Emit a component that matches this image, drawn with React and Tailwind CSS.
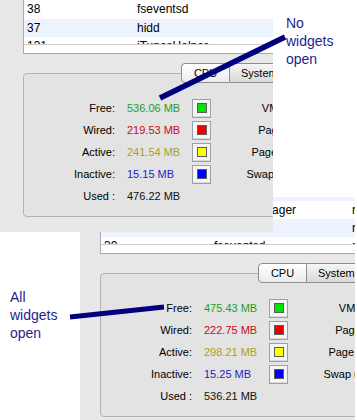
const FIRST_ROWS = [
  { h: 'h-[19px]', pid: '38', name: 'fseventsd', user: 'root' },
  { h: 'h-[18px]', alt: true, pid: '37', name: 'hidd', user: 'root' },
  { h: 'h-[7px]', pid: '131', name: 'iTunesHelper', user: 'user' },
];

const SECOND_ROWS = [
  { h: 'h-[4px]', alt: true, pid: '', name: '', user: '' },
  { h: 'h-[18px]', pid: '36', name: 'dynamic_pager', user: 'root' },
  { h: 'h-[18px]', alt: true, pid: '35', name: 'distnoted', user: 'root' },
  { h: 'h-[7px]', pid: '30', name: 'fseventsd', user: 'root' },
];

const SWATCHES = {
  green: 'bg-[#00e400]',
  red: 'bg-[#f00000]',
  yellow: 'bg-[#ffff00]',
  blue: 'bg-[#0000ff]',
};

const FIRST_STATS = [
  { label: 'Free:', value: '536.06 MB', tone: 'text-[#1f9e1f]', swatch: 'green', right: 'VM size:' },
  { label: 'Wired:', value: '219.53 MB', tone: 'text-[#cc0a14]', swatch: 'red', right: 'Page ins:' },
  { label: 'Active:', value: '241.54 MB', tone: 'text-[#a8a21e]', swatch: 'yellow', right: 'Page outs:' },
  { label: 'Inactive:', value: '15.15 MB', tone: 'text-[#2424c0]', swatch: 'blue', right: 'Swap used:' },
  { label: 'Used :', value: '476.22 MB', tone: 'text-[#111111]' },
];

const SECOND_STATS = [
  { label: 'Free:', value: '475.43 MB', tone: 'text-[#1f9e1f]', swatch: 'green', right: 'VM size:' },
  { label: 'Wired:', value: '222.75 MB', tone: 'text-[#cc0a14]', swatch: 'red', right: 'Page ins:' },
  { label: 'Active:', value: '298.21 MB', tone: 'text-[#a8a21e]', swatch: 'yellow', right: 'Page outs:' },
  { label: 'Inactive:', value: '15.25 MB', tone: 'text-[#2424c0]', swatch: 'blue', right: 'Swap used:' },
  { label: 'Used :', value: '536.21 MB', tone: 'text-[#111111]' },
];

function ProcessTable({ rows, inset }) {
  return (
    <div className={`${inset} w-[420px] border-b border-l border-[#a9a9a9] bg-white text-[12px] text-black`}>
      {rows.map((row, i) => (
        <div
          key={i}
          className={`flex overflow-hidden leading-[18px] ${row.h} ${row.alt ? 'bg-[#edf3fe]' : 'bg-white'}`}
        >
          <span className="w-[113px] shrink-0 pl-[3px]">{row.pid}</span>
          <span className="w-[138px] shrink-0">{row.name}</span>
          <span className="shrink-0">{row.user}</span>
        </div>
      ))}
      <div className="h-[9px] border-t border-[#cdcdcd]" />
    </div>
  );
}

function Swatch({ color }) {
  return (
    <div className="flex h-[19px] w-[19px] shrink-0 items-center justify-center border border-[#a0a0a0] bg-[#f5f5f5] shadow-[inset_0_-1px_0_#dadada]">
      <div className={`h-[10px] w-[10px] border border-[#5c5c5c] ${SWATCHES[color]}`} />
    </div>
  );
}

function MemoryBox({ stats, inset }) {
  return (
    <div className={`${inset} mt-[19px] h-[144px] w-[420px] rounded-[4px] border border-[#b3b3b3] bg-[#e3e3e3]`}>
      {/* segmented tabs sit on the top border */}
      <div className="-mt-[11px] ml-[157px] flex h-[20px] text-[11px] leading-[18px] text-black">
        <div className="w-[49px] rounded-l-[4px] border border-[#8e8e8e] bg-linear-to-b from-white to-[#ebebeb] text-center">
          CPU
        </div>
        <div className="border-y border-r border-[#8e8e8e] bg-linear-to-b from-[#f6f6f6] to-[#d9d9d9] px-[11px]">
          System Memory
        </div>
      </div>

      <div className="mt-[14px] text-[11px] text-black">
        {stats.map((s) => (
          <div key={s.label} className="flex h-[22px] items-center">
            <span className="w-[91px] shrink-0 text-right">{s.label}</span>
            <span className={`ml-[12px] w-[65px] shrink-0 ${s.tone}`}>{s.value}</span>
            {s.swatch ? <Swatch color={s.swatch} /> : <span className="w-[19px] shrink-0" />}
            <span className="w-[93px] shrink-0 text-right">{s.right}</span>
          </div>
        ))}
      </div>
    </div>
  );
}

function Panel({ className, rows, stats, inset }) {
  return (
    <div className={`absolute overflow-hidden bg-[#e8e8e8] ${className}`}>
      <ProcessTable rows={rows} inset={inset} />
      <MemoryBox stats={stats} inset={inset} />
    </div>
  );
}

function Note({ className, lines }) {
  return (
    <div className={`absolute text-[14px] leading-[18px] text-[#1e1e8e] ${className}`}>
      {lines.map((l) => (
        <div key={l}>{l}</div>
      ))}
    </div>
  );
}

export default function App() {
  return (
    <div className="relative h-[420px] w-[357px] overflow-hidden bg-white font-['Liberation_Sans',Arial,sans-serif]">
      <Panel className="left-[80px] top-[197px] h-[240px] w-[275px]" rows={SECOND_ROWS} stats={SECOND_STATS} inset="ml-[20px]" />
      <Panel className="left-0 top-0 z-10 h-[232px] w-[273px]" rows={FIRST_ROWS} stats={FIRST_STATS} inset="ml-[23px]" />

      <Note className="left-[286px] top-[14px] z-20" lines={['No', 'widgets', 'open']} />
      <Note className="left-[10px] top-[288px] z-20" lines={['All', 'widgets', 'open']} />

      <svg className="pointer-events-none absolute inset-0 z-30" width="357" height="420" viewBox="0 0 357 420">
        <line x1="160" y1="98" x2="285" y2="37" stroke="#00007f" strokeWidth="5.5" />
        <line x1="70" y1="317" x2="164" y2="307" stroke="#00007f" strokeWidth="5" />
      </svg>
    </div>
  );
}
